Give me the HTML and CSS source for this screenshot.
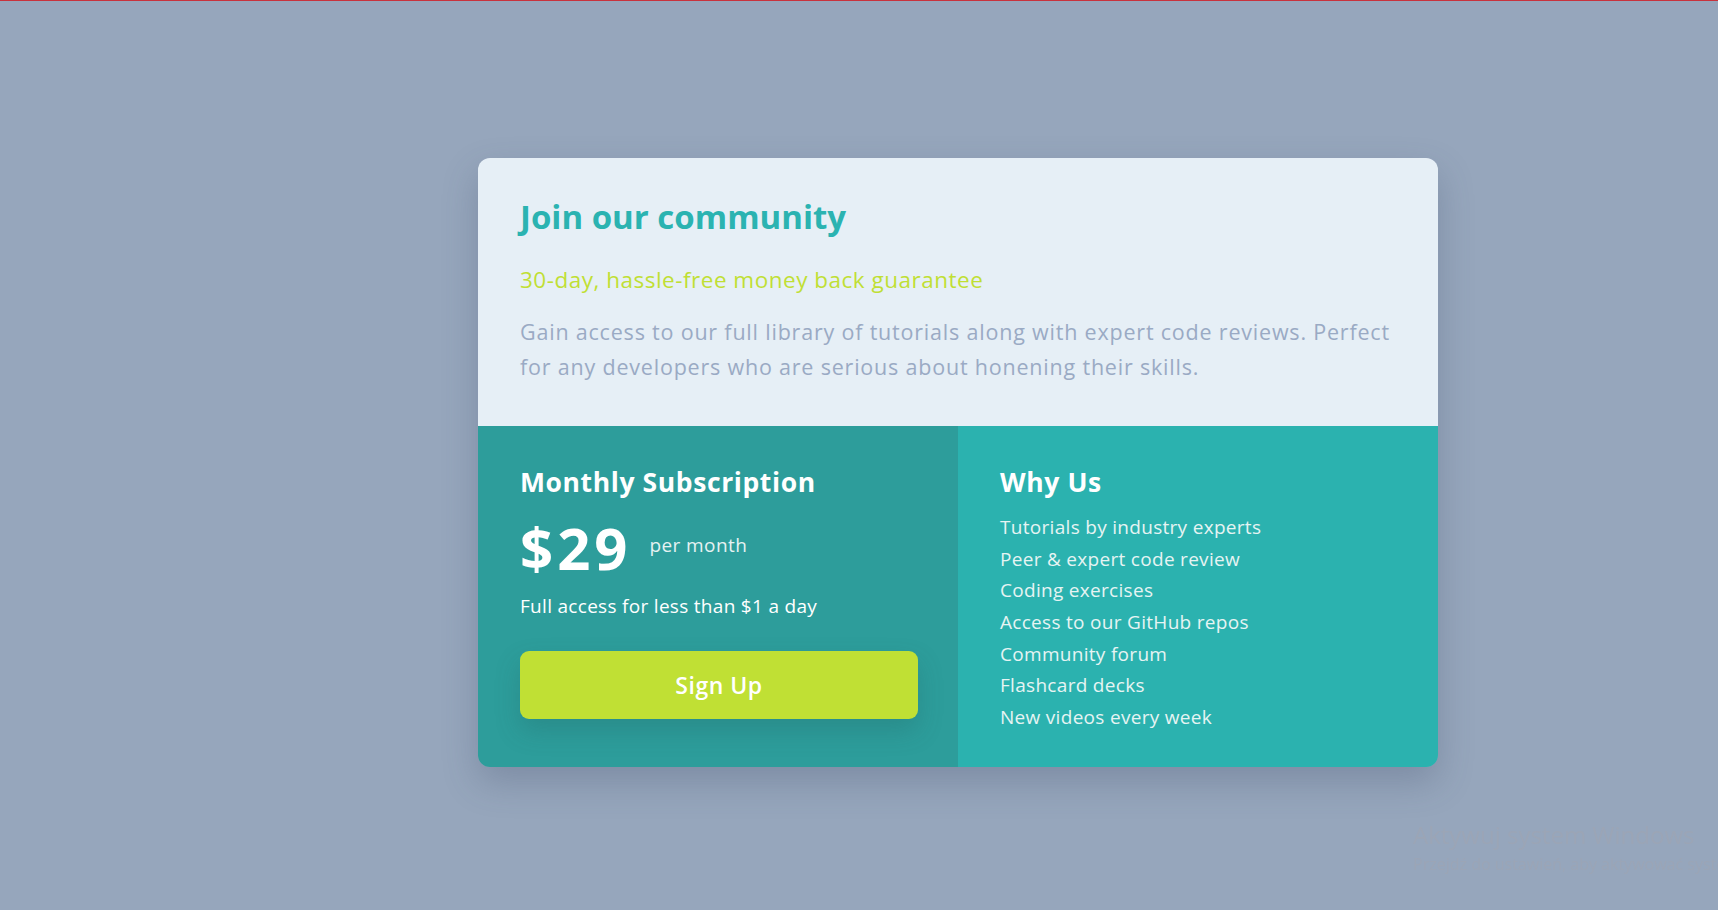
FILE: index.html
```html
<!DOCTYPE html>
<html lang="en">
<head>
<meta charset="utf-8">
<title>Single price grid component</title>
<link rel="stylesheet" href="styles.css">
</head>
<body>
<div class="page">
  <main class="card">
    <section class="intro">
      <h1 class="intro-title">Join our community</h1>
      <p class="intro-sub">30-day, hassle-free money back guarantee</p>
      <p class="intro-text">Gain access to our full library of tutorials along with expert code reviews. Perfect for any developers who are serious about honening their skills.</p>
    </section>
    <div class="cols">
      <section class="sub">
        <h2 class="col-title">Monthly Subscription</h2>
        <div class="price-row">
          <span class="price">$29</span>
          <span class="per">per month</span>
        </div>
        <p class="sub-note">Full access for less than $1 a day</p>
        <button class="signup" type="button">Sign Up</button>
      </section>
      <section class="why">
        <h2 class="col-title">Why Us</h2>
        <ul class="why-list">
          <li>Tutorials by industry experts</li>
          <li>Peer &amp; expert code review</li>
          <li>Coding exercises</li>
          <li>Access to our GitHub repos</li>
          <li>Community forum</li>
          <li>Flashcard decks</li>
          <li>New videos every week</li>
        </ul>
      </section>
    </div>
  </main>
</div>
<div class="activate">
  <div class="activate-title">Aktywuj system Windows</div>
  <div class="activate-text">Przejdź do ustawień, aby aktywować system Windows.</div>
</div>
</body>
</html>
```
FILE: styles.css
```css
* { box-sizing: border-box; }
html, body { margin: 0; padding: 0; }
body {
  background: #96a6bc;
  border-top: 1px solid #c8323c;
  font-family: "Open Sans", "Liberation Sans", sans-serif;
  height: 910px;
  overflow: hidden;
}
.page {
  padding: 157px 0 0 478px;
}
.card {
  width: 960px;
  border-radius: 12px;
  overflow: hidden;
  box-shadow: 0 15px 35px rgba(60, 75, 105, 0.28);
}
.intro {
  background: #e6eff6;
  height: 268px;
  padding: 39px 40px 0 42px;
}
.intro-title {
  margin: 0;
  font-size: 33px;
  line-height: 40px;
  font-weight: 700;
  color: #2bb3b1;
}
.intro-sub {
  margin: 28px 0 0;
  font-size: 22.5px;
  line-height: 30px;
  letter-spacing: 0.5px;
  color: #c0df34;
}
.intro-text {
  margin: 18.5px 0 0;
  font-size: 21.5px;
  line-height: 35px;
  letter-spacing: 0.8px;
  color: #9aaac4;
}
.cols {
  display: flex;
  height: 341px;
}
.sub, .why {
  flex: 0 0 480px;
  padding: 38.5px 40px 0 42px;
  color: #fff;
}
.sub { background: #2d9d9b; }
.why { background: #2bb2af; }
.col-title {
  margin: 0;
  font-size: 26.5px;
  line-height: 34px;
  font-weight: 700;
  letter-spacing: 0.6px;
}
.price-row {
  display: flex;
  align-items: flex-start;
  gap: 18px;
  margin-top: 17.6px;
  height: 64px;
}
.price {
  font-size: 58px;
  line-height: 64px;
  font-weight: 700;
  letter-spacing: 4px;
}
.per {
  margin-top: 16.4px;
  font-size: 19px;
  line-height: 26px;
  letter-spacing: 0.4px;
  color: #e6f2f2;
}
.sub-note {
  margin: 11.8px 0 0;
  font-size: 19px;
  line-height: 28px;
  letter-spacing: 0.3px;
}
.signup {
  display: block;
  width: 398px;
  height: 68px;
  margin-top: 30.7px;
  border: 0;
  border-radius: 9px;
  background: #c0e034;
  color: #fff;
  font-family: inherit;
  font-size: 23px;
  font-weight: 600;
  letter-spacing: 0.5px;
  box-shadow: 0 12px 25px rgba(30, 90, 90, 0.25);
}
.why-list {
  list-style: none;
  margin: 13.4px 0 0;
  padding: 0;
  font-size: 19px;
  line-height: 31.67px;
  letter-spacing: 0.3px;
  color: #e6f4f3;
}
.activate {
  position: fixed;
  left: 1413px;
  top: 820px;
  white-space: nowrap;
  color: #9ba5b6;
  font-family: "Open Sans", "Noto Sans", sans-serif;
}
.activate-title { font-size: 24px; line-height: 30px; }
.activate-text { font-size: 16px; line-height: 28px; }
```
